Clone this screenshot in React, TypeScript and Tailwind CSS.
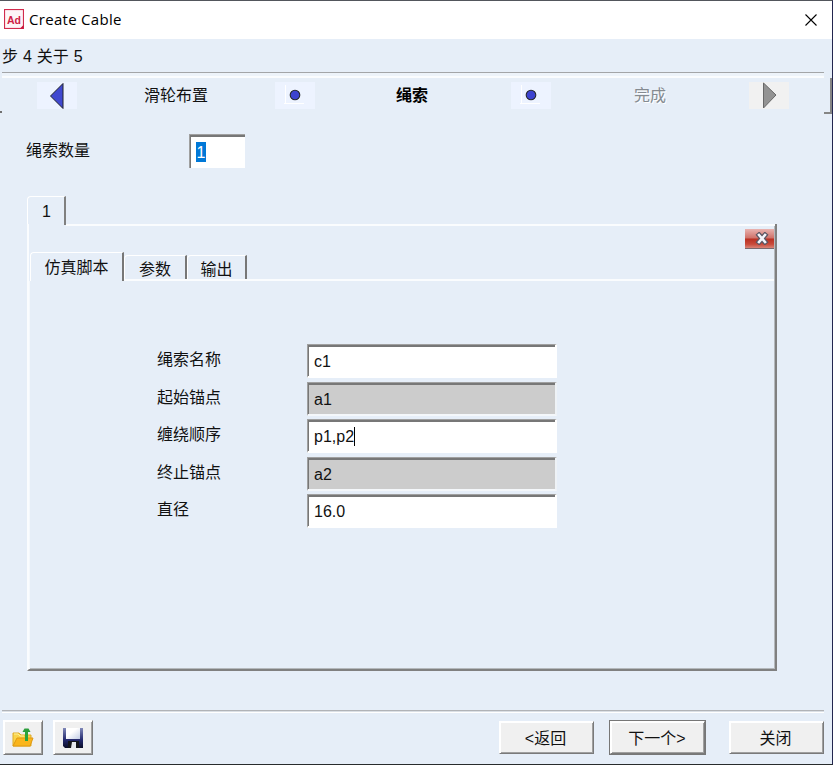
import React, { useState } from "react";
import clsx from "clsx";

interface FieldProps {
    label: string;
    value: string;
    disabled?: boolean;
    caret?: boolean;
}

const fields: FieldProps[] = [
    { label: "绳索名称", value: "c1" },
    { label: "起始锚点", value: "a1", disabled: true },
    { label: "缠绕顺序", value: "p1,p2", caret: true },
    { label: "终止锚点", value: "a2", disabled: true },
    { label: "直径", value: "16.0" },
];

const innerTabs = ["仿真脚本", "参数", "输出"];

const sunken = "border-t border-l border-t-[#a0a0a0] border-l-[#a0a0a0] shadow-[inset_1px_2px_0_#777777]";
const raised = "bg-[#f0f0f0] border border-t-white border-l-white border-r-[#7a7a7a] border-b-[#7a7a7a] shadow-[inset_1px_1px_0_#fff,inset_-1px_-1px_0_#a0a0a0]";

const Field: React.FC<FieldProps> = ({ label, value, disabled, caret }) => (
    <div className="flex h-[34px]">
        <div className="w-[150px] pt-[4px] leading-6">{label}</div>
        <div
            className={clsx(
                "w-[250px] border-r-2 border-b-2 pl-[6px] flex items-center",
                sunken,
                disabled ? "bg-[#cccccc] border-r-[#eef2f6] border-b-[#f4f7fa]" : "bg-white border-r-white border-b-white"
            )}
        >
            <span className="pt-[3px]">{value}</span>
            {caret && <span className="w-px h-[19px] bg-black mt-[1px]" />}
        </div>
    </div>
);

const DotIcon = () => (
    <div className="w-10 h-[27px] bg-[#edf3ff]">
        <svg width="40" height="27" viewBox="0 0 40 27">
            <path d="M10.500 3v18M9 21.500h20" stroke="#fff" fill="none" />
            <circle cx="20" cy="13" r="4.800" fill="#3d43cf" stroke="#26282c" strokeWidth="1.100" />
        </svg>
    </div>
);

const WizardSteps = () => (
    <div className="flex h-[27px] mt-[4px] leading-[27px]">
        <div className="w-10 h-[27px] ml-[35px] bg-[#edf3ff]">
            <svg width="40" height="27" viewBox="0 0 40 27">
                <path d="M26 1.500v25L13.500 14z" fill="#4048d0" stroke="#20222a" />
            </svg>
        </div>
        <div className="w-[198px] text-center">滑轮布置</div>
        <DotIcon />
        <div className="w-[196px] pr-[2px] text-center font-bold text-black">绳索</div>
        <DotIcon />
        <div className="w-[198px] text-center text-[#858b91] [text-shadow:1px_1px_0_#fff]">完成</div>
        <div className="w-10 h-[27px] bg-[#f1f1f1]">
            <svg width="40" height="27" viewBox="0 0 40 27">
                <path d="M14.500 1v25L27 13z" fill="#939393" stroke="#686868" />
            </svg>
        </div>
    </div>
);

const FolderIcon = () => (
    <svg width="22" height="20" viewBox="0 0 22 20">
        <path d="M1 18V5h6l2 2h10v11z" fill="#f9d44a" stroke="#dfab28" />
        <path d="M2 6h4l2 2h4" stroke="#fff09a" fill="none" />
        <path d="M1 18l4-8h16l-3 8z" fill="#fab51c" stroke="#e09a14" />
        <path d="M14.500 2v11" stroke="#2ca43c" strokeWidth="3" fill="none" />
        <path d="M10.500 4l2-3.500h4l2 3.500z" fill="#2c9e3c" />
    </svg>
);

const SaveIcon = () => (
    <svg width="20" height="20" viewBox="0 0 20 20">
        <defs>
            <linearGradient id="disk" x1="0" x2="0" y1="0" y2="1">
                <stop offset="0" stopColor="#8088b8" />
                <stop offset=".6" stopColor="#23286c" />
                <stop offset="1" stopColor="#0c0e26" />
            </linearGradient>
            <linearGradient id="paper" x1="0" x2="1" y1="0" y2="1">
                <stop offset=".4" stopColor="#fff" />
                <stop offset="1" stopColor="#c4cee6" />
            </linearGradient>
        </defs>
        <path d="M0 0h20v20H2l-2-2z" fill="url(#disk)" />
        <path d="M3 0h14v11H3z" fill="url(#paper)" />
        <path d="M5 13h11v7H5z" fill="#15151a" />
        <path d="M9 14h4v6H8z" fill="#e6e8ec" />
    </svg>
);

const App: React.FC = () => {
    const [activeTab, setActiveTab] = useState(0);

    return (
        <div className="w-[833px] h-[765px] flex flex-col overflow-hidden bg-[#e6eef8] border-t border-t-[#52565c] border-r border-r-[#23264f] border-b border-b-[#282c2c] text-[16px] text-[#111111] font-['Liberation_Sans','Noto_Sans_CJK_SC',sans-serif]">
            <div className="h-[38px] shrink-0 flex items-center bg-white pl-1 pr-[15px]">
                <svg className="-mt-[2px]" width="20" height="20" viewBox="0 0 20 20">
                    <rect x=".5" y=".5" width="19" height="19" fill="#fdf5f7" stroke="#d12b4d" strokeWidth="1.200" />
                    <path d="M19.500 16v3.500H16z" fill="#c8173c" />
                    <text x="3" y="14.500" fontSize="11" fontWeight="bold" textLength="14" lengthAdjust="spacingAndGlyphs" fill="#ce2145" fontFamily="Liberation Sans">Ad</text>
                </svg>
                <span className="ml-[5px] -mt-[2px] text-[15px] tracking-[0.3px] text-black font-['Open_Sans',sans-serif]">Create Cable</span>
                <svg className="ml-auto" width="12" height="12" viewBox="0 0 12 12">
                    <path d="M.5.5l11 11M11.500.5l-11 11" stroke="#000" strokeWidth="1.100" />
                </svg>
            </div>

            <div className="h-[33px] shrink-0 pl-[2px] pt-[6px] leading-6 [word-spacing:0.5px]">步 4 关于 5</div>
            <div className="h-[6px] shrink-0 mr-[8px] ml-[2px] border-t border-t-[#a3a5a8] border-b-2 border-b-[#fafcfe] bg-[#edf3fa]" />

            <div className="flex h-[36px] shrink-0">
                <div className="w-[2px] h-[2px] mt-[33px] bg-[#707070]" />
                <WizardSteps />
                <div className="ml-auto w-[8px] h-[36px] border-r-2 border-b-2 border-[#858585]" />
            </div>

            <div className="flex mt-[20px] ml-[26px] h-[34px] shrink-0">
                <div className="w-[163px] pt-[5px] leading-6">绳索数量</div>
                <div className={clsx("w-[56px] h-[34px] bg-white pl-[6px] pt-[7px]", sunken)}>
                    <span className="block w-[10px] h-[20px] leading-[21px] text-center bg-[#0078d7] text-white">1</span>
                </div>
            </div>

            <div className="ml-[27px] mt-[28px] w-[39px] h-[29px] shrink-0 border-t border-l border-r-2 border-t-white border-l-white border-r-[#808080] rounded-tl-[4px] pl-[14px] leading-[30px]">
                1
            </div>
            <div className="ml-[27px] w-[750px] h-[447px] -mt-px shrink-0 flex flex-col border-l-2 border-l-[#fafcfe] border-r-2 border-r-[#808080] border-b-2 border-b-[#808080] shadow-[inset_-1px_-1px_0_#b4b8bc]">
                <div className="h-[2px] shrink-0 ml-[37px] bg-[#fafcfe]" />
                <button className="self-end mr-px mt-[3px] w-[29px] h-[20px] shrink-0 flex items-center justify-center pl-[5px] border-b border-b-[#79686c] bg-[linear-gradient(to_bottom,#e9b3b0_0%,#cf7169_48%,#b93022_52%,#c94a3a_80%,#d98478_100%)]">
                    <svg width="14" height="13" viewBox="0 0 14 13">
                        <path d="M4 3l6 7M10 3l-6 7" stroke="#5b5663" strokeWidth="5" strokeLinecap="square" />
                        <path d="M4 3l6 7M10 3l-6 7" stroke="#f4f5fb" strokeWidth="2.600" strokeLinecap="square" />
                    </svg>
                </button>
                <div className="flex items-end mt-[3px] ml-[1px] h-[29px] shrink-0">
                    {innerTabs.map((tab, i) => (
                        <button
                            key={tab}
                            onClick={() => setActiveTab(i)}
                            className={clsx(
                                "border-t border-l border-t-white border-l-white border-r-2 border-r-[#777777] rounded-tl-[4px] whitespace-nowrap",
                                i === 0 ? "w-[94px]" : i === 1 ? "w-[63px]" : "w-[60px]",
                                activeTab === i ? "h-[29px] leading-[29px]" : "h-[26px] leading-[27px]"
                            )}
                        >
                            {tab}
                        </button>
                    ))}
                </div>
                <div className="h-[2px] shrink-0 bg-[#fafcfe] -mt-[2px] mr-px ml-[95px]" />
                <div className="flex-1 border-l border-l-[#f4f8fc] pl-[127px] pt-[63px] flex flex-col gap-[3.500px]">
                    {fields.map((field) => (
                        <Field key={field.label} {...field} />
                    ))}
                </div>
            </div>

            <div className="h-[3px] mt-[39px] shrink-0 ml-[2px] mr-[8px] border-t border-t-[#b1b3b7] border-b border-b-white bg-[#dadfe5]" />
            <div className="flex items-center mt-[7px] pl-[3px] pr-[8px] h-[35px] shrink-0">
                <button className={clsx("w-[40px] h-[35px] flex items-center justify-center", raised)}>
                    <FolderIcon />
                </button>
                <button className={clsx("w-[40px] h-[35px] ml-[10px] flex items-center justify-center", raised)}>
                    <SaveIcon />
                </button>
                <button className={clsx("w-[95px] h-[33px] ml-auto pr-[2px] pt-[2px]", raised)}>&lt;返回</button>
                <div className="ml-[15px] border border-[#777777]">
                    <button className={clsx("block w-[95px] h-[33px] pr-[1px] pt-[2px]", raised)}>下一个&gt;</button>
                </div>
                <button className={clsx("w-[95px] h-[33px] ml-[23px] pr-[2px] pt-[2px]", raised)}>关闭</button>
            </div>
        </div>
    );
};

export default App;
